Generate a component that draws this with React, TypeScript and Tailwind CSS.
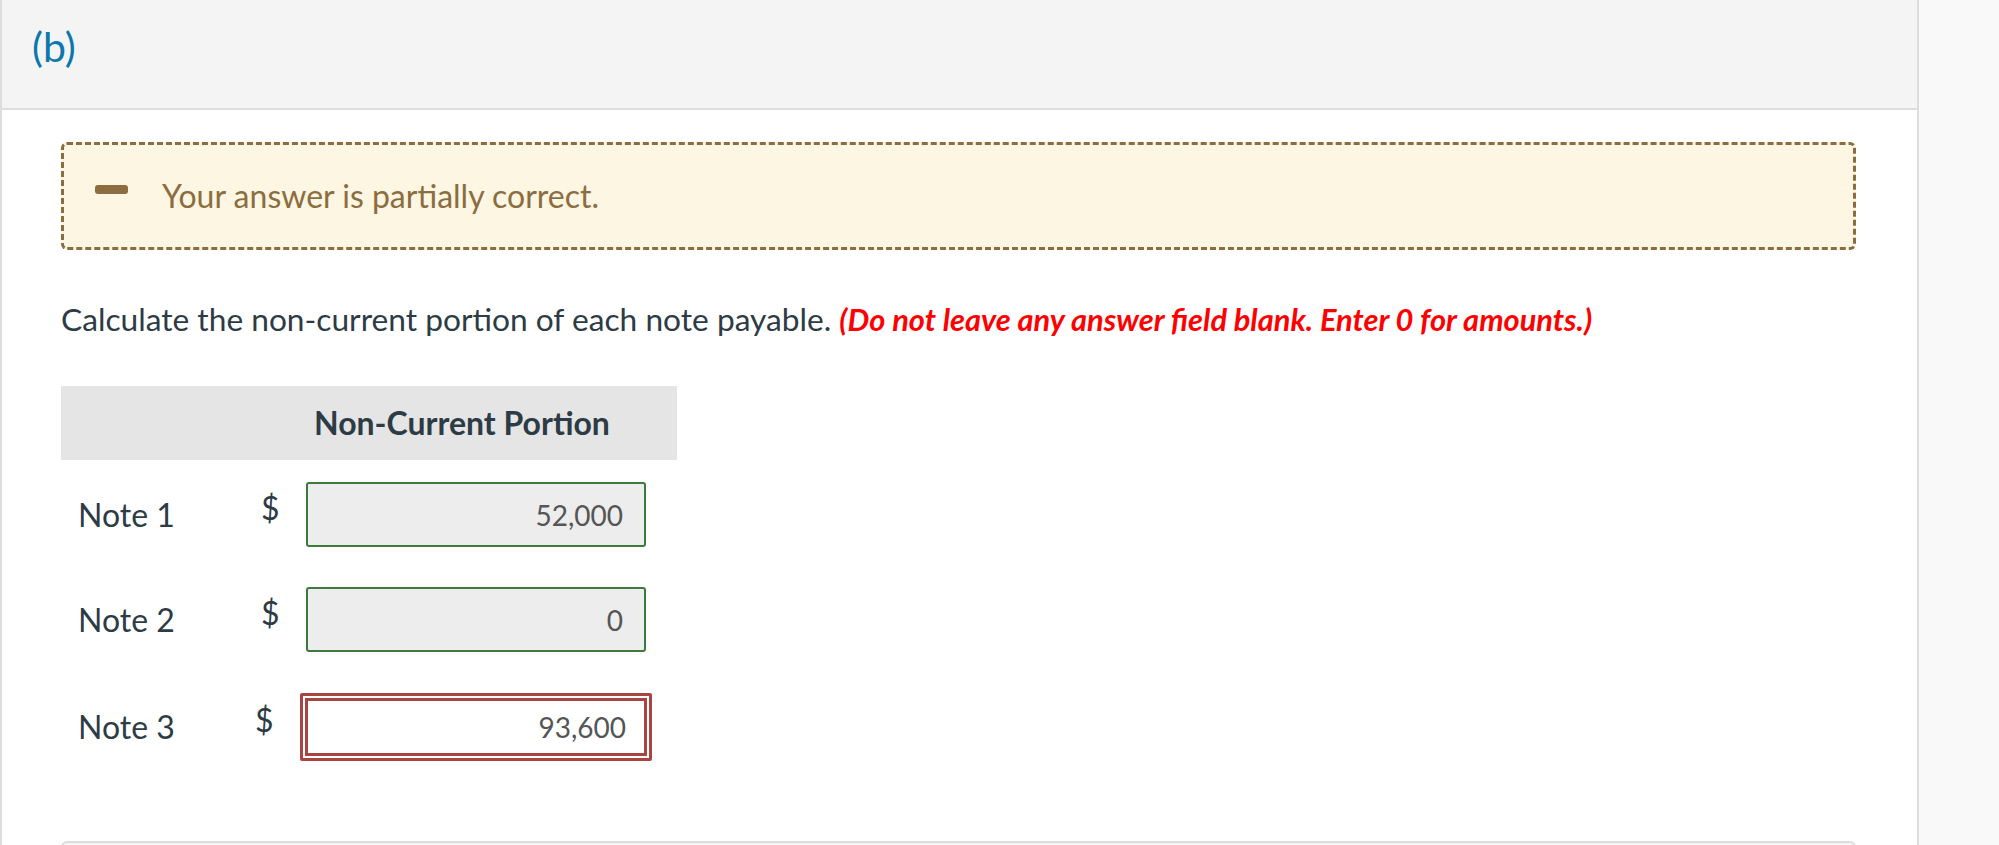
import React from "react";

const font = { fontFamily: "Lato, 'Open Sans', sans-serif" };

function GreenInput({ value }: { value: string }) {
  return (
    <div className="w-[340px] h-[65px] border-2 border-[#3d7a3d] rounded-[3px] bg-[#ededed] flex items-center justify-end pr-[21px] text-[28px] text-[#555555]">
      {value}
    </div>
  );
}

function RedInput({ value }: { value: string }) {
  return (
    <div className="w-[352px] h-[68px] border-[3px] border-[#a94442] rounded-[2px] p-[2px] bg-white">
      <div className="w-full h-full border-[3px] border-[#a94442] bg-white flex items-center justify-end pr-[18px] text-[28px] text-[#555555]">
        {value}
      </div>
    </div>
  );
}

export default function App() {
  return (
    <div className="flex w-[1999px] h-[845px] overflow-hidden bg-[#f9f9f9]" style={font}>
      <div className="w-[1919px] h-full border-l-2 border-r-2 border-[#dddddd] bg-white flex flex-col">
        <div className="h-[110px] shrink-0 bg-[#f4f4f4] border-b-2 border-[#dddddd] pl-[30px] pt-[22px]">
          <span className="text-[41px] leading-[50px] text-[#0a78ad]">(b)</span>
        </div>
        <div className="pl-[59px] pr-[61px] pt-[32px] flex flex-col text-[#2d3b45]">
          <div className="h-[108px] border-[3px] border-dashed border-[#8b6d3f] rounded-[6px] bg-[#fdf6e3] flex items-center pl-[31px]">
            <div className="w-[33px] h-[9px] rounded-[3px] bg-[#8b6d3f] mb-[14px]" />
            <span className="ml-[34px] text-[32px] text-[#8b6d3f]">Your answer is partially correct.</span>
          </div>
          <div className="mt-[49px] text-[31.7px] leading-[40px] whitespace-nowrap">
            Calculate the non-current portion of each note payable.{" "}
            <span className="text-[#ff0000] font-bold italic text-[30.8px]">
              (Do not leave any answer field blank. Enter 0 for amounts.)
            </span>
          </div>
          <div className="mt-[46px] w-[616px] h-[74px] bg-[#e5e5e5] flex items-center pl-[253px] text-[32px] font-bold">
            Non-Current Portion
          </div>
          <div className="mt-[22px] flex items-center h-[65px] text-[32px]">
            <div className="w-[200px] pl-[17px]">Note 1</div>
            <div className="w-[45px] self-start mt-[2px]">$</div>
            <GreenInput value="52,000" />
          </div>
          <div className="mt-[40px] flex items-center h-[65px] text-[32px]">
            <div className="w-[200px] pl-[17px]">Note 2</div>
            <div className="w-[45px] self-start mt-[2px]">$</div>
            <GreenInput value="0" />
          </div>
          <div className="mt-[41px] flex items-center h-[68px] text-[32px]">
            <div className="w-[194px] pl-[17px]">Note 3</div>
            <div className="w-[45px] self-start mt-[3px]">$</div>
            <RedInput value="93,600" />
          </div>
          <div className="mt-[80px] h-[30px] rounded-t-[6px] border-2 border-[#dddddd] bg-[#f5f5f5]" />
        </div>
      </div>
      <div className="flex-1 bg-[#f9f9f9]" />
    </div>
  );
}
